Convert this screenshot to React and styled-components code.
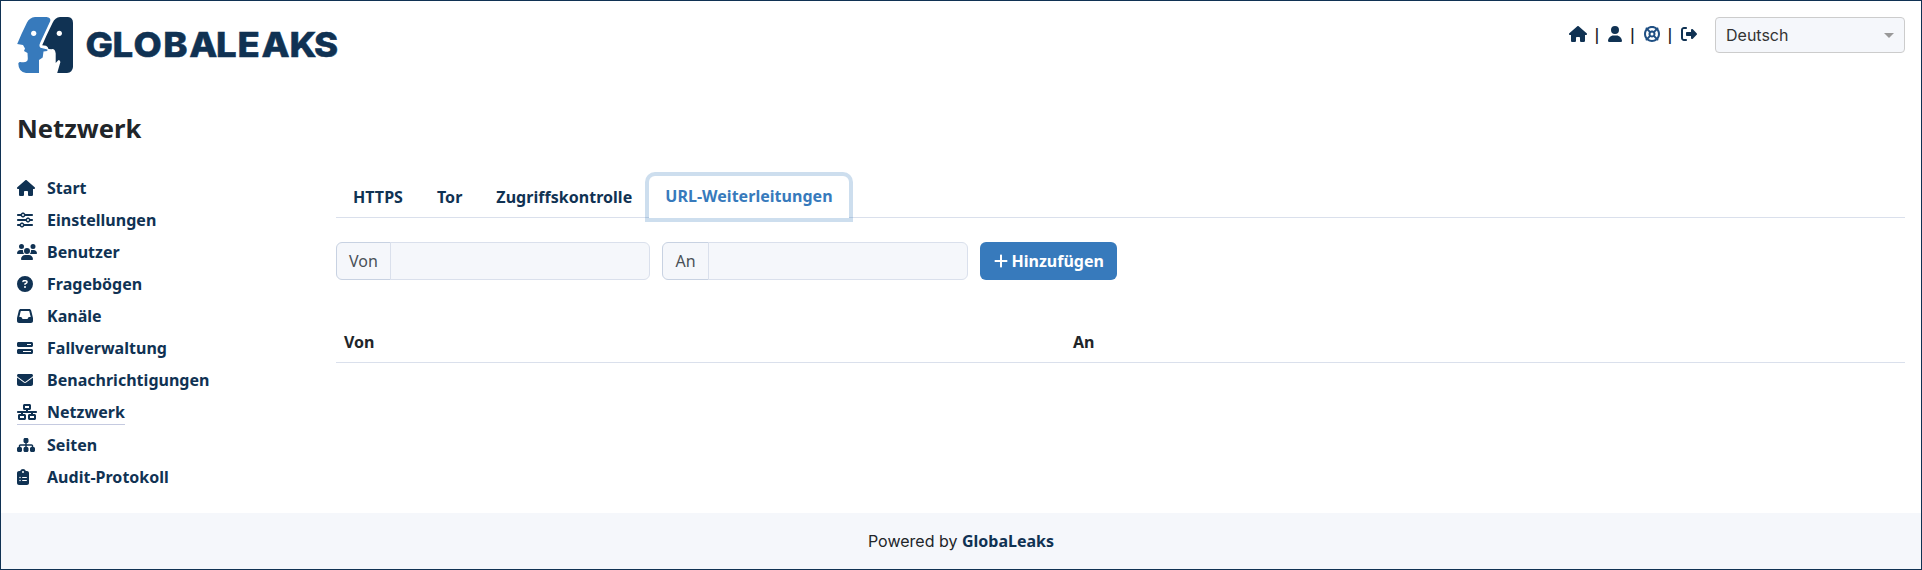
import React from "react";
import styled, { createGlobalStyle } from "styled-components";
import {
  FaHouse, FaUser, FaLifeRing, FaRightFromBracket, FaSliders, FaUsers, FaCircleQuestion,
  FaInbox, FaBarsProgress, FaEnvelope, FaNetworkWired, FaSitemap, FaClipboardList, FaPlus,
} from "react-icons/fa6";

const NAVY = "#103253";
const BLUE = "#377abc";

const GlobalStyle = createGlobalStyle`
  *, *::before, *::after { box-sizing: border-box; }
  body { margin: 0; background: #fff; color: #212529; font: 400 16px/24px Inter, "Noto Sans", sans-serif; }
`;

const Page = styled.div`
  height: 570px;
  border: 1px solid ${NAVY};
  display: flex;
  flex-direction: column;
`;

const Header = styled.header`
  display: flex;
  justify-content: space-between;
  align-items: flex-start;
  padding: 16px 16px 0;
  height: 112px;
`;

const Logo = styled.svg`
  display: block;
  width: 324px;
  height: 56px;
`;

const LogoText = styled.text`
  font: 800 34.5px Inter, sans-serif;
  fill: ${NAVY};
  stroke: ${NAVY};
  stroke-width: 0.5px;
`;

const Tools = styled.div`
  display: flex;
  align-items: flex-start;
`;

const ToolIcon = styled.a`
  display: flex;
  margin-top: 9px;
  color: ${(p) => (p.$light ? "#1f4f83" : NAVY)};

  svg { width: ${(p) => p.$width || 16}px; height: 16px; }
`;

const Separator = styled.span`
  width: 21.4px;
  margin-top: 5px;
  padding-right: 1px;
  text-align: center;
  color: #1b1b28;
  font-family: "Noto Sans", sans-serif;
  font-weight: 600;
`;

const LanguageSelect = styled.div`
  display: flex;
  align-items: center;
  justify-content: space-between;
  width: 190px;
  height: 36px;
  margin-left: 18px;
  padding: 0 10px;
  border: 1px solid #ccc;
  border-radius: 4px;
  background: #f5f7fb;
  color: #333;
`;

const Caret = styled.span`
  margin-top: 1px;
  border: 5px solid transparent;
  border-top-color: #999;
  border-bottom: 0;
`;

const Title = styled.h1`
  margin: 0;
  padding: 0 16px;
  font: 700 25.6px/32px "Noto Sans", sans-serif;
`;

const Body = styled.div`
  display: flex;
  flex: 1;
  padding: 27px 16px 0;
`;

const Sidebar = styled.nav`
  display: flex;
  flex-direction: column;
  align-items: flex-start;
  gap: 8px;
  width: 319px;
  padding-top: 4px;
`;

const NavItem = styled.a`
  display: flex;
  align-items: center;
  border-bottom: ${(p) => (p.$active ? "1px solid #c5cae0" : "0")};
  color: ${NAVY};
  font: 700 16px/24px "Noto Sans", sans-serif;
  letter-spacing: 0.02px;
`;

const NavIcon = styled.span`
  display: flex;
  width: 30px;

  svg { width: ${(p) => p.$width}px; height: 16px; }
`;

const Main = styled.main`
  flex: 1;
  padding-top: 4px;
`;

const Tabs = styled.div`
  display: flex;
  border-bottom: 1px solid #dae0ec;
`;

const Tab = styled.a`
  margin-bottom: -1px;
  padding: 8px 16px;
  border: 1px solid ${(p) => (p.$active ? "#dae0ec #dae0ec #fff" : "transparent")};
  border-radius: 6px 6px 0 0;
  background: ${(p) => (p.$active ? "#fff" : "transparent")};
  box-shadow: ${(p) => (p.$active ? "0 0 0 4px rgba(55, 122, 188, 0.25)" : "none")};
  color: ${(p) => (p.$active ? BLUE : NAVY)};
  font: 700 16px/24px "Noto Sans", sans-serif;
  letter-spacing: 0.035px;
`;

const RedirectForm = styled.form`
  display: flex;
  gap: 12px;
  margin-top: 24px;
`;

const InputGroup = styled.label`
  display: flex;
  width: ${(p) => p.$width}px;
  height: 38px;
`;

const InputLabel = styled.span`
  width: ${(p) => p.$width}px;
  padding: 6px 0;
  text-align: center;
  border: 1px solid #c8d2e2;
  border-radius: 6px 0 0 6px;
  background: #f5f7fb;
  color: #495057;
  font: 400 16px/24px "Noto Sans", sans-serif;
`;

const Input = styled.input`
  flex: 1;
  min-width: 0;
  margin-left: -1px;
  border: 1px solid #dae0ec;
  border-radius: 0 6px 6px 0;
  background: #f5f7fb;
`;

const AddButton = styled.button`
  display: flex;
  align-items: center;
  gap: 4px;
  width: 137px;
  height: 38px;
  padding: 0 0 0 13.5px;
  border: 0;
  border-radius: 6px;
  background: ${BLUE};
  color: #fff;
  font: 700 16px/24px "Noto Sans", sans-serif;

  svg { width: 14px; height: 16px; margin-top: -1px; }
`;

const Table = styled.table`
  width: 100%;
  margin-top: 42px;
  border-collapse: collapse;
`;

const HeadCell = styled.th`
  width: ${(p) => p.$width};
  padding: 8px;
  border-bottom: 1px solid #dae0ec;
  text-align: left;
  font: 700 16px/24px "Noto Sans", sans-serif;
`;

const Footer = styled.footer`
  height: 56px;
  line-height: 56px;
  background: #f5f7fb;
  text-align: center;
`;

const FooterLink = styled.a`
  color: ${NAVY};
  font-family: "Noto Sans", sans-serif;
  font-weight: 700;
`;

const menu = [
  ["Start", FaHouse, 18],
  ["Einstellungen", FaSliders, 16],
  ["Benutzer", FaUsers, 20],
  ["Fragebögen", FaCircleQuestion, 16],
  ["Kanäle", FaInbox, 16],
  ["Fallverwaltung", FaBarsProgress, 16],
  ["Benachrichtigungen", FaEnvelope, 16],
  ["Netzwerk", FaNetworkWired, 20],
  ["Seiten", FaSitemap, 18],
  ["Audit-Protokoll", FaClipboardList, 12],
];

const tabs = ["HTTPS", "Tor", "Zugriffskontrolle", "URL-Weiterleitungen"];

function BrandLogo() {
  return (
    <Logo viewBox="0 0 324 56">
      <path fill={BLUE} d="M18 0H29.500Q34 .5 33.300 4L23.300 25.500Q21.500 29 23.500 30.700L30.500 32.500L30.300 34L26.500 34.500L25.700 40.500L22 43V56H9Q1.500 55 1.300 46.500Q2 44.500 4.500 45.200Q11 46 10.800 41.500L10.500 36L7 34L8 31.500L6 28L.2 27L4.500 17L10 5.500Q12.500 .5 18 0Z" />
      <path fill={NAVY} d="M43 0H51Q56 .5 56 6V50Q55.500 55.500 50 56H40.200L43.400 45Q42.500 42 41 43.400L38.700 46V36.500Q38 31.500 34.500 32.200L31.500 32Q31 29.500 29 28.700L25.200 28.300L29.500 18.500L35.500 6Q38 .5 43 0Z" />
      <circle cx="16.700" cy="16.300" r="2.600" fill="#fff" />
      <circle cx="42.300" cy="16.300" r="2.600" fill="#fff" />
      <LogoText transform="scale(1.06 1)" x="64.600 90.200 109.800 138 162.500 187.800 208 230.700 257 280.200" y="40.200">GLOBALEAKS</LogoText>
    </Logo>
  );
}

export default function App() {
  return (
    <>
      <GlobalStyle />
      <Page>
        <Header>
          <BrandLogo />
          <Tools>
            <ToolIcon $width={18}><FaHouse /></ToolIcon>
            <Separator>|</Separator>
            <ToolIcon $width={14}><FaUser /></ToolIcon>
            <Separator>|</Separator>
            <ToolIcon $light><FaLifeRing /></ToolIcon>
            <Separator>|</Separator>
            <ToolIcon><FaRightFromBracket /></ToolIcon>
            <LanguageSelect>Deutsch<Caret /></LanguageSelect>
          </Tools>
        </Header>
        <Title>Netzwerk</Title>
        <Body>
          <Sidebar>
            {menu.map(([label, Icon, width]) => (
              <NavItem key={label} $active={label === "Netzwerk"}>
                <NavIcon $width={width}><Icon /></NavIcon>
                {label}
              </NavItem>
            ))}
          </Sidebar>
          <Main>
            <Tabs>
              {tabs.map((label) => (
                <Tab key={label} $active={label === "URL-Weiterleitungen"}>{label}</Tab>
              ))}
            </Tabs>
            <RedirectForm>
              <InputGroup $width={314}><InputLabel $width={55}>Von</InputLabel><Input /></InputGroup>
              <InputGroup $width={306}><InputLabel $width={47}>An</InputLabel><Input /></InputGroup>
              <AddButton type="button"><FaPlus />Hinzufügen</AddButton>
            </RedirectForm>
            <Table>
              <thead>
                <tr><HeadCell $width="729px">Von</HeadCell><HeadCell>An</HeadCell></tr>
              </thead>
            </Table>
          </Main>
        </Body>
        <Footer>Powered by <FooterLink>GlobaLeaks</FooterLink></Footer>
      </Page>
    </>
  );
}
